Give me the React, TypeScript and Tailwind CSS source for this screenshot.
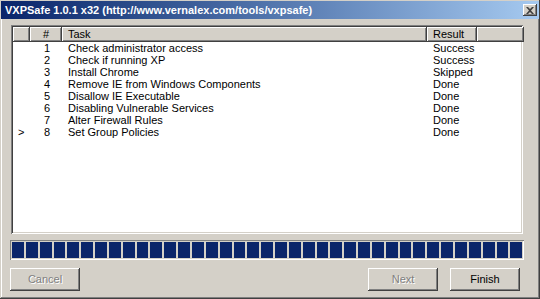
import React from "react";

// Classic Win2000-style wizard window: title bar, task list, segmented
// progress bar and the three wizard buttons.

const tasks = [
  { n: 1, task: "Check administrator access", result: "Success" },
  { n: 2, task: "Check if running XP", result: "Success" },
  { n: 3, task: "Install Chrome", result: "Skipped" },
  { n: 4, task: "Remove IE from Windows Components", result: "Done" },
  { n: 5, task: "Disallow IE Executable", result: "Done" },
  { n: 6, task: "Disabling Vulnerable Services", result: "Done" },
  { n: 7, task: "Alter Firewall Rules", result: "Done" },
  { n: 8, task: "Set Group Policies", result: "Done", current: true },
];

const raised =
  "shadow-[inset_-1px_-1px_#404040,inset_1px_1px_#ffffff,inset_-2px_-2px_#808080,inset_2px_2px_#d4d0c8]";

function HeaderCell({ w, children, className = "" }: { w: string; children?: React.ReactNode; className?: string }) {
  return (
    <div className={`${w} h-[15px] shrink-0 bg-[#d4d0c8] ${raised} flex items-center px-[6px] ${className}`}>
      {children}
    </div>
  );
}

function Button({ label, disabled }: { label: string; disabled?: boolean }) {
  return (
    <button
      className={`w-[70px] h-[23px] bg-[#d4d0c8] ${raised} flex items-center justify-center ${
        disabled ? "text-[#808080] [text-shadow:1px_1px_#ffffff]" : "text-black"
      }`}
    >
      {label}
    </button>
  );
}

export default function App() {
  return (
    <div className="w-[540px] h-[299px] bg-[#d4d0c8] font-['Liberation_Sans',Arial,sans-serif] text-[11px] leading-none text-black shadow-[inset_-1px_-1px_#404040,inset_1px_1px_#d4d0c8,inset_-2px_-2px_#808080,inset_2px_2px_#ffffff] p-[3px] pt-0 flex flex-col">
      {/* Title bar */}
      <div className="h-[18px] mt-[1px] -mx-[2px] flex items-center justify-between pl-[4px] pr-[2px] bg-gradient-to-r from-[#0a246a] to-[#a6caf0]">
        <span className="font-bold text-white text-[11px]">VXPSafe 1.0.1 x32 (http://www.vernalex.com/tools/vxpsafe)</span>
        <div className={`w-[14px] h-[12px] bg-[#d4d0c8] ${raised} flex items-center justify-center`}>
          <svg width="8" height="7" viewBox="0 0 8 7">
            <path d="M0 0h2l2 2 2-2h2L5 3.5 8 7H6L4 5 2 7H0l3-3.5z" fill="#404040" />
          </svg>
        </div>
      </div>

      <div className="flex-1 flex flex-col px-[7px] pt-[6px]">
        {/* Task list */}
        <div className="h-[209px] ml-[1px] mr-[7px] bg-white shadow-[inset_1px_1px_#808080,inset_-1px_-1px_#ffffff,inset_2px_2px_#404040,inset_-2px_-2px_#d4d0c8] p-[2px] flex flex-col">
          <div className="flex">
            <HeaderCell w="w-[17px]" />
            <HeaderCell w="w-[32px]" className="justify-center">#</HeaderCell>
            <HeaderCell w="w-[365px]">Task</HeaderCell>
            <HeaderCell w="w-[50px]">Result</HeaderCell>
            <HeaderCell w="w-[47px]" />
          </div>
          <div className="flex flex-col">
            {tasks.map((t) => (
              <div key={t.n} className="flex h-[12px] items-center">
                <div className="w-[17px] shrink-0 pl-[5px]">{t.current ? ">" : ""}</div>
                <div className="w-[32px] shrink-0 text-center pl-[2px]">{t.n}</div>
                <div className="w-[365px] shrink-0 px-[6px]">{t.task}</div>
                <div className="w-[50px] shrink-0 px-[6px]">{t.result}</div>
              </div>
            ))}
          </div>
        </div>

        {/* Progress bar */}
        <div className="mt-[6px] mr-[6px] h-[20px] shadow-[inset_1px_1px_#808080,inset_-1px_-1px_#ffffff] p-[2px] flex gap-[2px]">
          {Array.from({ length: 37 }).map((_, i) => (
            <div key={i} className="flex-1 bg-[#0a246a]" />
          ))}
        </div>

        {/* Buttons */}
        <div className="mt-[8px] mr-[10px] flex items-center">
          <Button label="Cancel" disabled />
          <div className="flex-1" />
          <Button label="Next" disabled />
          <div className="w-[12px]" />
          <Button label="Finish" />
        </div>
      </div>
    </div>
  );
}
